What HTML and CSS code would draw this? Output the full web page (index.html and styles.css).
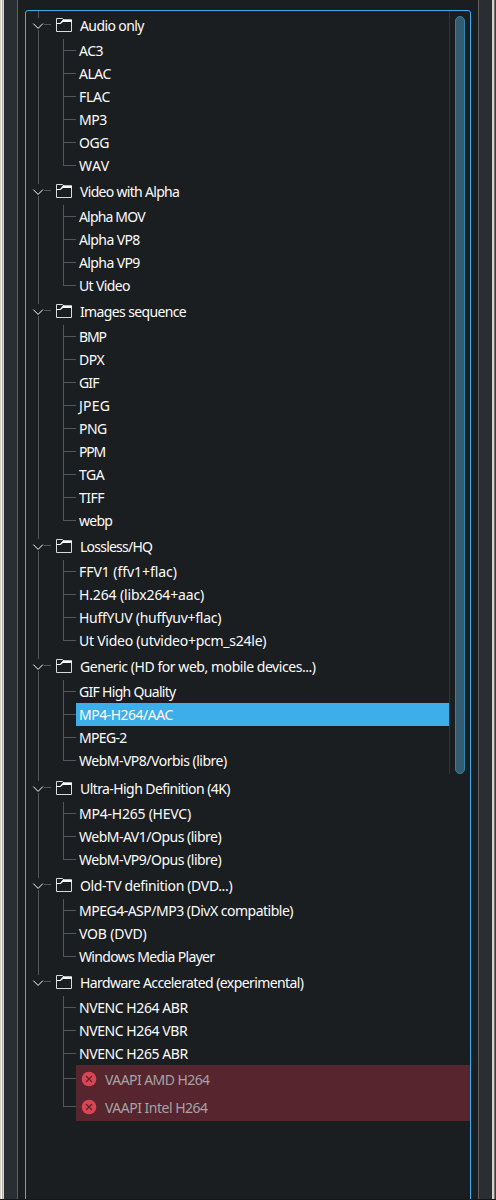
FILE: index.html
```
<!DOCTYPE html>
<html lang="en"><head><meta charset="utf-8"><title>Render presets</title><link rel="stylesheet" href="styles.css"></head>
<body><div class="window"><div class="panel"><div class="view"><div class="tree" id="tree"></div><div class="gutter"><div class="thumb"></div></div></div></div></div>
<script src="tree.js"></script></body></html>
```

FILE: styles.css
```
* { box-sizing: border-box; }
body { margin: 0; background: #2a2e32; }
.window {
  position: relative;
  width: 496px; height: 1200px;
  padding: 0 17px;
  overflow: hidden;
  border-bottom: 1px solid #17141a;
  background: linear-gradient(90deg, #d6d2ca 0 1px, #f4f2ee 1px 2px, #b5b1a9 2px 3px, #d6d2ca 3px 4px, #2a2e32 4px 492px, #d6d2ca 492px 494px, #77746f 494px 495px, #3a3c40 495px);
}
.panel { height: 1200px; padding: 10px 7px 0; border: solid #5c5f62; border-width: 0 1px; background: #1b1e20; }
.view { display: flex; height: 1200px; border: 1px solid #3daee9; border-radius: 3px; }
.tree { flex: none; width: 423px; font: 14px/24px "Noto Sans", sans-serif; letter-spacing: -0.5px; color: #fcfcfc; white-space: nowrap; }
.gutter { flex: none; width: 21px; height: 763px; padding: 5px 0 0 5px; border-left: 1px solid #303437; }
.thumb { width: 10px; height: 758px; border: 1px solid #2f83ad; border-radius: 5px; background: #335c73; }
.group { background: linear-gradient(#54575a, #54575a) 12px 0 / 1px 100% no-repeat; }
.group:last-child { background-size: 1px 7px; }
.gap { padding-bottom: 2px; }
.header { display: flex; height: 28px; line-height: 30px; }
.header svg { flex: none; width: 54px; height: 28px; }
.leaf { display: flex; height: 23px; padding-left: 37px; }
.branch { flex: none; width: 13px; background: linear-gradient(#54575a, #54575a) 0 0 / 1px 100% no-repeat, linear-gradient(#54575a, #54575a) 0 11px / 13px 1px no-repeat; }
.header + .leaf .branch { background-position: 0 0, 0 11px; }
.leaf:last-child .branch { background-size: 1px 11px, 13px 1px; }
.label { flex: 1; padding-left: 3px; }
.selected .label { background: #3daee9; }
.error { width: 444px; height: 28px; line-height: 30px; color: #a2a4a7; }
.error .branch { background-position: 0 0, 0 13px; }
.error:last-child .branch { background-size: 1px 13px, 13px 1px; }
.error .label { display: flex; background: #57252d; }
.error svg { width: 26px; height: 28px; }
```

FILE: tree.js
```
const groups = [
  ['Audio only', ['AC3', 'ALAC', 'FLAC', 'MP3', 'OGG', 'WAV']],
  ['Video with Alpha', ['Alpha MOV', 'Alpha VP8', 'Alpha VP9', 'Ut Video']],
  ['Images sequence', ['BMP', 'DPX', 'GIF', 'JPEG', 'PNG', 'PPM', 'TGA', 'TIFF', 'webp']],
  ['Lossless/HQ', ['FFV1 (ffv1+flac)', 'H.264 (libx264+aac)', 'HuffYUV (huffyuv+flac)', 'Ut Video (utvideo+pcm_s24le)']],
  ['Generic (HD for web, mobile devices...)', ['GIF High Quality', 'MP4-H264/AAC', 'MPEG-2', 'WebM-VP8/Vorbis (libre)']],
  ['Ultra-High Definition (4K)', ['MP4-H265 (HEVC)', 'WebM-AV1/Opus (libre)', 'WebM-VP9/Opus (libre)']],
  ['Old-TV definition (DVD...)', ['MPEG4-ASP/MP3 (DivX compatible)', 'VOB (DVD)', 'Windows Media Player']],
  ['Hardware Accelerated (experimental)', ['NVENC H264 ABR', 'NVENC H264 VBR', 'NVENC H265 ABR', 'VAAPI AMD H264', 'VAAPI Intel H264']]
];
/* Extra width in pixels, spread over the letters of a label. */
const stretch = {
  'Audio only': -1, 'WAV': 3, 'FLAC': 1, 'JPEG': 3, 'BMP': -2, 'PPM': -2, 'GIF': -1, 'webp': -1,
  'Video with Alpha': -3, 'Alpha MOV': -3, 'Alpha VP8': -1, 'Alpha VP9': -1, 'Ut Video': -1,
  'Images sequence': -2, 'Lossless/HQ': -3,
  'FFV1 (ffv1+flac)': 7, 'H.264 (libx264+aac)': 7, 'HuffYUV (huffyuv+flac)': 5, 'Ut Video (utvideo+pcm_s24le)': 7,
  'Generic (HD for web, mobile devices...)': 2, 'GIF High Quality': -3, 'MPEG-2': -1,
  'Ultra-High Definition (4K)': -2, 'MP4-H265 (HEVC)': 4,
  'Old-TV definition (DVD...)': 4, 'VOB (DVD)': 3, 'Windows Media Player': -3,
  'Hardware Accelerated (experimental)': -3, 'NVENC H264 ABR': 1, 'NVENC H264 VBR': 1, 'NVENC H265 ABR': 1,
  'VAAPI AMD H264': -1
};
const text = t => `<span style="letter-spacing:${(-0.5 + (stretch[t] || 0) / t.length).toFixed(2)}px">${t}</span>`;
const folder = '<svg viewBox="0 0 54 28"><path fill="#1b1e20" d="M11 7h3v12h-3z"/><path fill="none" stroke="#fcfcfc" d="M7.3 12.600l4.800 4.800 4.800-4.800"/><path stroke="#54575a" d="M18 13.500h7"/><path fill="none" stroke="#d8d9da" d="M30.500 7.500h6l1.500 1.500h7.500v11.500h-15z"/><path fill="#fcfcfc" d="M37 8.500h9v2.500h-9l-2.500 2h-4v-1h3.500z"/></svg>';
const cross = '<svg viewBox="0 0 26 28"><circle cx="13" cy="14" r="7.300" fill="#da4453"/><path stroke="#57252d" stroke-width="1.200" d="M10 11l6 6m0-6l-6 6"/></svg>'.replace('0 0 26 28', '3 0 26 28');
document.getElementById('tree').innerHTML = groups.map(([name, items]) =>
  `<div class="group${name.startsWith('Generic') ? ' gap' : ''}"><div class="header">${folder}${text(name)}</div>` +
  items.map(t => {
    const bad = t.startsWith('VAAPI');
    return `<div class="leaf${bad ? ' error' : ''}${t === 'MP4-H264/AAC' ? ' selected' : ''}"><span class="branch"></span><span class="label">${bad ? cross : ''}${text(t)}</span></div>`;
  }).join('') + '</div>').join('');
```
